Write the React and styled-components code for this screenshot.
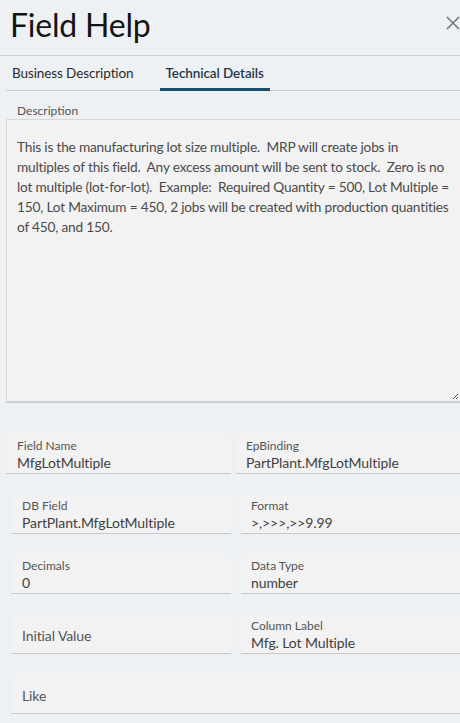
import React from "react";
import styled, { createGlobalStyle } from "styled-components";

const Global = createGlobalStyle`
  html, body { margin: 0; padding: 0; background: #eef1f4; }
  body { font-family: Lato, "Noto Sans", sans-serif; overflow: hidden; }
  * { box-sizing: border-box; }
`;

const Page = styled.div`
  width: 460px;
  min-height: 723px;
  background: #eef1f4;
  color: #333;
`;

const Header = styled.header`
  height: 56px;
  display: flex;
  align-items: center;
  padding-left: 10px;
  border-bottom: 1px solid #cdd0d4;
`;

const Title = styled.h1`
  margin: 0;
  font-size: 32px;
  font-weight: 400;
  color: #141414;
  line-height: 40px;
  padding-bottom: 6px;
  letter-spacing: -0.2px;
`;

const Close = styled.button`
  margin-left: auto;
  margin-right: -1px;
  margin-bottom: 10px;
  width: 16px;
  height: 16px;
  padding: 0;
  border: none;
  background: none;
  display: flex;
  color: #767676;
`;

const Tabs = styled.nav`
  margin-left: 6px;
  height: 35px;
  display: flex;
  align-items: stretch;
  border-bottom: 1px solid #c8ccd0;
`;

const Tab = styled.div`
  display: flex;
  align-items: center;
  padding: 2px 6px 0;
  margin-right: ${(p) => p.$gap || 0}px;
  font-size: 13.5px;
  letter-spacing: -0.1px;
  font-weight: ${(p) => (p.$active ? 600 : 400)};
  color: ${(p) => (p.$active ? "#23384a" : "#2a2a2a")};
  border-bottom: 3px solid ${(p) => (p.$active ? "#144f72" : "transparent")};
  margin-bottom: -1px;
`;

const Section = styled.section`
  padding-left: 6px;
`;

const SectionLabel = styled.div`
  padding: 12px 0 0 11px;
  height: 28px;
  font-size: 12px;
  line-height: 16px;
  color: #555;
`;

const TextBox = styled.div`
  position: relative;
  height: 284px;
  background: #f2f2f2;
  border-top: 1px solid #d8d8d8;
  border-left: 1px solid #d8d8d8;
  border-bottom: 2px solid #cfcfcf;
  padding: 17px 0 0 10px;
  font-size: 13.7px;
  line-height: 20px;
  letter-spacing: -0.2px;
  color: #4a4a4a;
  white-space: pre;
  overflow: hidden;
`;

const Grip = styled.svg`
  position: absolute;
  right: 1px;
  bottom: 1px;
`;

const Fields = styled.div`
  padding-top: 31px;
  display: flex;
  flex-direction: column;
  gap: 20px;
`;

const Row = styled.div`
  display: grid;
  grid-template-columns: ${(p) => p.$first ? "225px 1fr" : p.$full ? "1fr" : "220px 1fr"};
  column-gap: ${(p) => (p.$first ? 5 : 10)}px;
  padding-left: ${(p) => (p.$first ? 6 : 11)}px;
`;

const Field = styled.div`
  height: 40px;
  background: #f2f2f2;
  border-bottom: 1px solid #c9c9c9;
  padding: 4px 0 0 ${(p) => (p.$right ? 10 : 11)}px;
  display: flex;
  flex-direction: column;
  justify-content: ${(p) => (p.$empty ? "center" : "flex-start")};
`;

const Label = styled.div`
  font-size: 12px;
  line-height: 16px;
  color: #555;
`;

const EmptyLabel = styled.div`
  font-size: 14px;
  line-height: 18px;
  color: #555;
  letter-spacing: -0.1px;
`;

const Value = styled.div`
  font-size: 14px;
  line-height: 18px;
  color: #404040;
  letter-spacing: -0.1px;
`;

const description =
  "This is the manufacturing lot size multiple.  MRP will create jobs in\n" +
  "multiples of this field.  Any excess amount will be sent to stock.  Zero is no\n" +
  "lot multiple (lot-for-lot).  Example:  Required Quantity = 500, Lot Multiple =\n" +
  "150, Lot Maximum = 450, 2 jobs will be created with production quantities\n" +
  "of 450, and 150.";

function FieldItem({ label, value, right }) {
  if (!value) {
    return (
      <Field $empty $right={right}>
        <EmptyLabel>{label}</EmptyLabel>
      </Field>
    );
  }
  return (
    <Field $right={right}>
      <Label>{label}</Label>
      <Value>{value}</Value>
    </Field>
  );
}

export default function App() {
  return (
    <Page>
      <Global />
      <Header>
        <Title>Field Help</Title>
        <Close aria-label="Close">
          <svg width="16" height="16" viewBox="0 0 16 16">
            <path d="M2 2 L14 14 M14 2 L2 14" stroke="currentColor" strokeWidth="1.6" fill="none" />
          </svg>
        </Close>
      </Header>
      <Tabs>
        <Tab $gap={20}>Business Description</Tab>
        <Tab $active>Technical Details</Tab>
      </Tabs>
      <Section>
        <SectionLabel>Description</SectionLabel>
        <TextBox>
          {description}
          <Grip width="7" height="7" viewBox="0 0 7 7">
            <path d="M1 6 L6 1 M4 6 L6 4" stroke="#555" strokeWidth="1" />
          </Grip>
        </TextBox>
      </Section>
      <Fields>
        <Row $first>
          <FieldItem label="Field Name" value="MfgLotMultiple" />
          <FieldItem right label="EpBinding" value="PartPlant.MfgLotMultiple" />
        </Row>
        <Row>
          <FieldItem label="DB Field" value="PartPlant.MfgLotMultiple" />
          <FieldItem right label="Format" value=">,>>>,>>9.99" />
        </Row>
        <Row>
          <FieldItem label="Decimals" value="0" />
          <FieldItem right label="Data Type" value="number" />
        </Row>
        <Row>
          <FieldItem label="Initial Value" />
          <FieldItem right label="Column Label" value="Mfg. Lot Multiple" />
        </Row>
        <Row $full>
          <FieldItem label="Like" />
        </Row>
      </Fields>
    </Page>
  );
}
